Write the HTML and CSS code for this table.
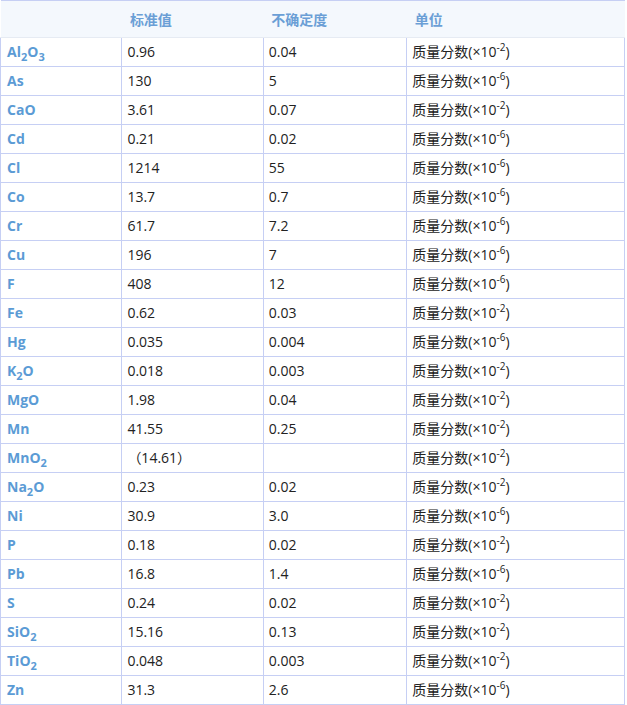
FILE: index.html
```html
<!DOCTYPE html>
<html lang="zh">
<head>
<meta charset="utf-8">
<link rel="stylesheet" href="styles.css">
</head>
<body>
<table class="data">
<thead>
<tr><th class="c1"></th><th class="c2">标准值</th><th class="c3">不确定度</th><th class="c4">单位</th></tr>
</thead>
<tbody>
<tr><td class="el">Al<sub>2</sub>O<sub>3</sub></td><td>0.96</td><td>0.04</td><td>质量分数(×10<sup>-2</sup>)</td></tr>
<tr><td class="el">As</td><td>130</td><td>5</td><td>质量分数(×10<sup>-6</sup>)</td></tr>
<tr><td class="el">CaO</td><td>3.61</td><td>0.07</td><td>质量分数(×10<sup>-2</sup>)</td></tr>
<tr><td class="el">Cd</td><td>0.21</td><td>0.02</td><td>质量分数(×10<sup>-6</sup>)</td></tr>
<tr><td class="el">Cl</td><td>1214</td><td>55</td><td>质量分数(×10<sup>-6</sup>)</td></tr>
<tr><td class="el">Co</td><td>13.7</td><td>0.7</td><td>质量分数(×10<sup>-6</sup>)</td></tr>
<tr><td class="el">Cr</td><td>61.7</td><td>7.2</td><td>质量分数(×10<sup>-6</sup>)</td></tr>
<tr><td class="el">Cu</td><td>196</td><td>7</td><td>质量分数(×10<sup>-6</sup>)</td></tr>
<tr><td class="el">F</td><td>408</td><td>12</td><td>质量分数(×10<sup>-6</sup>)</td></tr>
<tr><td class="el">Fe</td><td>0.62</td><td>0.03</td><td>质量分数(×10<sup>-2</sup>)</td></tr>
<tr><td class="el">Hg</td><td>0.035</td><td>0.004</td><td>质量分数(×10<sup>-6</sup>)</td></tr>
<tr><td class="el">K<sub>2</sub>O</td><td>0.018</td><td>0.003</td><td>质量分数(×10<sup>-2</sup>)</td></tr>
<tr><td class="el">MgO</td><td>1.98</td><td>0.04</td><td>质量分数(×10<sup>-2</sup>)</td></tr>
<tr><td class="el">Mn</td><td>41.55</td><td>0.25</td><td>质量分数(×10<sup>-2</sup>)</td></tr>
<tr><td class="el">MnO<sub>2</sub></td><td>（14.61）</td><td></td><td>质量分数(×10<sup>-2</sup>)</td></tr>
<tr><td class="el">Na<sub>2</sub>O</td><td>0.23</td><td>0.02</td><td>质量分数(×10<sup>-2</sup>)</td></tr>
<tr><td class="el">Ni</td><td>30.9</td><td>3.0</td><td>质量分数(×10<sup>-6</sup>)</td></tr>
<tr><td class="el">P</td><td>0.18</td><td>0.02</td><td>质量分数(×10<sup>-2</sup>)</td></tr>
<tr><td class="el">Pb</td><td>16.8</td><td>1.4</td><td>质量分数(×10<sup>-6</sup>)</td></tr>
<tr><td class="el">S</td><td>0.24</td><td>0.02</td><td>质量分数(×10<sup>-2</sup>)</td></tr>
<tr><td class="el">SiO<sub>2</sub></td><td>15.16</td><td>0.13</td><td>质量分数(×10<sup>-2</sup>)</td></tr>
<tr><td class="el">TiO<sub>2</sub></td><td>0.048</td><td>0.003</td><td>质量分数(×10<sup>-2</sup>)</td></tr>
<tr><td class="el">Zn</td><td>31.3</td><td>2.6</td><td>质量分数(×10<sup>-6</sup>)</td></tr>
</tbody>
</table>
</body>
</html>
```
FILE: styles.css
```css
html, body {
  margin: 0;
  padding: 0;
  background: #ffffff;
}
body {
  font-family: "Open Sans", "Noto Sans CJK SC", sans-serif;
  font-size: 14px;
  color: #222222;
}
.data {
  border-collapse: collapse;
  width: 625px;
  table-layout: fixed;
  border-top: 1px solid #c6cff4;
}
.data th {
  background: #f4f8fd;
  color: #6b9fd6;
  font-weight: bold;
  text-align: left;
  height: 36px;
  padding: 0 0 0 8px;
  border-bottom: 1px solid #e6ebf3;
  font-size: 14px;
}
.data th.c1 { width: 113px; }
.data th.c2 { width: 133px; }
.data th.c3 { width: 135px; }
.data th.c4 { width: 209px; }
.data td {
  height: 28px;
  padding: 0 0 0 5px;
  border: 1px solid #c6cff4;
  border-top: none;
  vertical-align: middle;
  line-height: 20px;
  white-space: nowrap;
}
.data td.el {
  padding-left: 6px;
  color: #5b9bd5;
  font-weight: bold;
}
.data sub {
  font-size: 11px;
  vertical-align: -4px;
  line-height: 0;
}
.data sup {
  font-size: 10px;
  vertical-align: 6px;
  line-height: 0;
}
```
